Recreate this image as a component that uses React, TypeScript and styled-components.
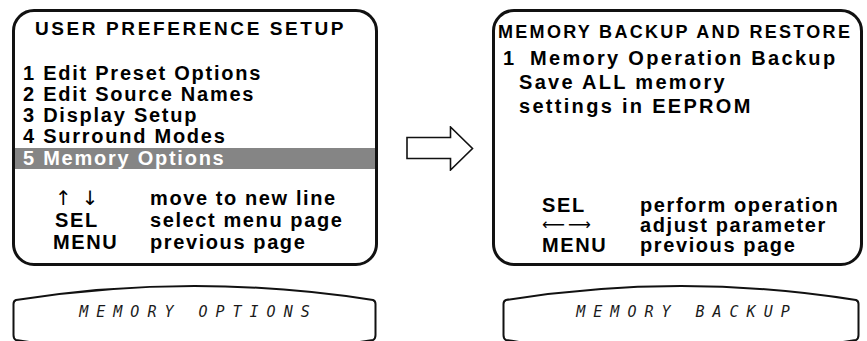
import React from "react";
import styled, { createGlobalStyle } from "styled-components";

const GlobalStyle = createGlobalStyle`
  html, body {
    margin: 0;
    padding: 0;
    background: #fff;
    overflow: hidden;
  }
  body {
    font-family: "Liberation Sans", Arial, sans-serif;
    color: #000;
  }
`;

const Page = styled.div`
  width: 867px;
  height: 341px;
  overflow: hidden;
  box-sizing: border-box;
  padding: 9px 0 0 12px;
  display: grid;
  grid-template-columns: 366px 114px 371px;
  grid-template-rows: 257px auto;
  row-gap: 19px;
`;

const Screen = styled.div`
  box-sizing: border-box;
  border: 3px solid #111;
  border-radius: 22px;
  display: flex;
  flex-direction: column;
  font-weight: bold;
`;

const Title = styled.div<{ $size: number; $spacing: number; $pad: number; $top: number }>`
  font-size: ${(p) => p.$size}px;
  letter-spacing: ${(p) => p.$spacing}px;
  line-height: 22px;
  padding: ${(p) => p.$top}px 0 0 ${(p) => p.$pad}px;
  white-space: nowrap;
`;

const MenuList = styled.div`
  margin-top: 23px;
  display: flex;
  flex-direction: column;
  font-size: 20px;
  letter-spacing: 1.75px;
  line-height: 21px;
`;

const MenuItem = styled.div<{ $active?: boolean }>`
  padding-left: 8px;
  white-space: nowrap;
  background: ${(p) => (p.$active ? "#858585" : "transparent")};
  color: ${(p) => (p.$active ? "#fff" : "#000")};
  margin-top: ${(p) => (p.$active ? 1 : 0)}px;
`;

const Legend = styled.div<{ $top: number; $pad: number; $key: number; $line: number }>`
  margin-top: ${(p) => p.$top}px;
  padding-left: ${(p) => p.$pad}px;
  display: grid;
  grid-template-columns: ${(p) => p.$key}px auto;
  font-size: 20px;
  letter-spacing: 1.6px;
  line-height: ${(p) => p.$line}px;
  white-space: nowrap;
`;

const Key = styled.span<{ $shift?: number }>`
  margin-left: ${(p) => p.$shift ?? 0}px;
`;

const ArrowGlyph = styled.span<{ $size: number; $spacing: number; $h: number }>`
  display: inline-block;
  height: ${(p) => p.$h}px;
  line-height: ${(p) => p.$h}px;
  vertical-align: top;
  font-family: "DejaVu Sans", sans-serif;
  font-weight: normal;
  font-size: ${(p) => p.$size}px;
  letter-spacing: ${(p) => p.$spacing}px;
`;

const Items = styled.div`
  margin-top: 3px;
  padding-left: 8px;
  font-size: 20px;
  letter-spacing: 2.3px;
  line-height: 24px;
  white-space: nowrap;
`;

const Num = styled.span`
  display: inline-block;
  width: 27px;
  letter-spacing: 0;
`;

const Indent = styled.div`
  padding-left: 16px;
`;

const ArrowCell = styled.div`
  padding: 117px 0 0 28px;
`;

const Display = styled.div<{ $left: number; $right: number }>`
  position: relative;
  height: 72px;
  margin: 0 ${(p) => p.$right}px 0 ${(p) => p.$left}px;
  display: flex;
  justify-content: center;
  padding-top: 19px;
  box-sizing: border-box;
`;

const Outline = styled.svg`
  position: absolute;
  inset: 0;
  width: 100%;
  height: 100%;
  overflow: visible;
`;

const LcdText = styled.span<{ $shift: number }>`
  position: relative;
  font-family: "DejaVu Sans Mono", monospace;
  font-style: oblique;
  font-size: 15px;
  line-height: 16px;
  letter-spacing: 8px;
  color: #1a1a1a;
  margin-left: ${(p) => p.$shift}px;
  white-space: pre;
`;

const LcdFrame: React.FC<{ width: number }> = ({ width }) => {
  const w = width;
  const d = `M 4 15 Q ${w / 2} -13 ${w - 4} 15 Q ${w - 1.5} 16 ${w - 1.5} 19 L ${w - 1.5} 50 Q ${w - 1.5} 54 ${w - 4} 55 Q ${w / 2} 83 4 55 Q 1.5 54 1.5 50 L 1.5 19 Q 1.5 16 4 15 Z`;
  return (
    <Outline viewBox={`0 0 ${w} 72`} preserveAspectRatio="none">
      <path d={d} fill="none" stroke="#111" strokeWidth={2} />
    </Outline>
  );
};

const BigArrow: React.FC = () => (
  <svg width="68" height="45" viewBox="0 0 68 45">
    <path
      d="M1 11.5 H44.5 V1 L66.5 22.5 L44.5 44 V32.5 H1 Z"
      fill="#fff"
      stroke="#111"
      strokeWidth={1.6}
      strokeLinejoin="miter"
    />
  </svg>
);

const menu = [
  "1 Edit Preset Options",
  "2 Edit Source Names",
  "3 Display Setup",
  "4 Surround Modes",
  "5 Memory Options",
];

const App: React.FC = () => {
  return (
    <>
      <GlobalStyle />
      <Page>
        <Screen>
          <Title $size={19} $spacing={2.6} $pad={20} $top={6}>
            USER PREFERENCE SETUP
          </Title>
          <MenuList>
            {menu.map((m, i) => (
              <MenuItem key={m} $active={i === 4}>
                {m}
              </MenuItem>
            ))}
          </MenuList>
          <Legend $top={18} $pad={40} $key={95} $line={22}>
            <Key>
              <ArrowGlyph $size={20} $spacing={10} $h={22}>
                ↑↓
              </ArrowGlyph>
            </Key>
            <span>move to new line</span>
            <Key>SEL</Key>
            <span>select menu page</span>
            <Key $shift={-2}>MENU</Key>
            <span>previous page</span>
          </Legend>
        </Screen>

        <ArrowCell>
          <BigArrow />
        </ArrowCell>

        <Screen>
          <Title $size={18} $spacing={2.3} $pad={3} $top={9}>
            MEMORY BACKUP AND RESTORE
          </Title>
          <Items>
            <div>
              <Num>1</Num>Memory Operation Backup
            </div>
            <Indent>Save ALL memory</Indent>
            <Indent>settings in EEPROM</Indent>
          </Items>
          <Legend $top={77} $pad={47} $key={98} $line={20}>
            <Key>SEL</Key>
            <span>perform operation</span>
            <Key>
              <ArrowGlyph $size={16} $spacing={3} $h={20}>
                ⟵⟶
              </ArrowGlyph>
            </Key>
            <span>adjust parameter</span>
            <Key>MENU</Key>
            <span>previous page</span>
          </Legend>
        </Screen>

        <Display $left={0} $right={1}>
          <LcdFrame width={365} />
          <LcdText $shift={8}>MEMORY OPTIONS</LcdText>
        </Display>
        <div />
        <Display $left={10} $right={3}>
          <LcdFrame width={358} />
          <LcdText $shift={12}>MEMORY BACKUP</LcdText>
        </Display>
      </Page>
    </>
  );
};

export default App;
